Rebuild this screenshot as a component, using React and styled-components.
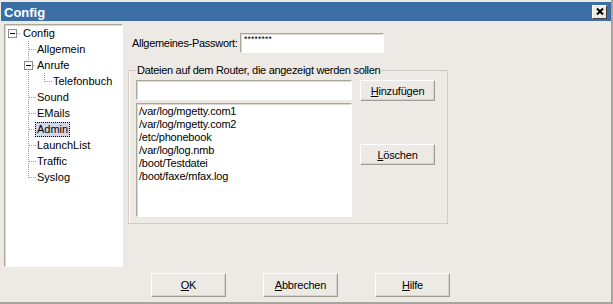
import styled, { createGlobalStyle } from 'styled-components';

const GlobalStyle = createGlobalStyle`
    html, body {
        margin: 0;
        padding: 0;
        background: #edeae5;
    }
    * {
        box-sizing: border-box;
    }
`;

const treeItems = [
    { label: 'Config', cells: ['root'] },
    { label: 'Allgemein', cells: ['blank', 'tee'] },
    { label: 'Anrufe', cells: ['blank', 'teebox'] },
    { label: 'Telefonbuch', cells: ['blank', 'vline', 'elbow'] },
    { label: 'Sound', cells: ['blank', 'tee'] },
    { label: 'EMails', cells: ['blank', 'tee'] },
    { label: 'Admin', cells: ['blank', 'tee'], selected: true },
    { label: 'LaunchList', cells: ['blank', 'tee'] },
    { label: 'Traffic', cells: ['blank', 'tee'] },
    { label: 'Syslog', cells: ['blank', 'elbow'] },
];

const files = [
    '/var/log/mgetty.com1',
    '/var/log/mgetty.com2',
    '/etc/phonebook',
    '/var/log/log.nmb',
    '/boot/Testdatei',
    '/boot/faxe/mfax.log',
];

function Connector ({ kind }) {
    const dot = { stroke: '#a0a0a0', strokeDasharray: '1 1', shapeRendering: 'crispEdges' };
    const hasBox = kind === 'root' || kind === 'teebox';
    const width = kind === 'root' ? 18 : 16;
    return (
        <svg width={width} height="16" viewBox={`0 0 ${width} 16`}>
            {(kind === 'tee' || kind === 'vline') && <line x1="6.5" y1="0" x2="6.5" y2="16" {...dot} />}
            {kind === 'elbow' && <line x1="6.5" y1="0" x2="6.5" y2="9" {...dot} />}
            {kind === 'teebox' && (
                <>
                    <line x1="6.5" y1="0" x2="6.5" y2="4" {...dot} />
                    <line x1="6.5" y1="14" x2="6.5" y2="16" {...dot} />
                </>
            )}
            {(kind === 'tee' || kind === 'elbow') && <line x1="7" y1="8.5" x2="14" y2="8.5" {...dot} />}
            {hasBox && (
                <>
                    <line x1="11" y1="8.5" x2={width - 3} y2="8.5" {...dot} />
                    <rect x="2.5" y="4.5" width="8" height="8" fill="#fff" stroke="#8c8c8c" shapeRendering="crispEdges" />
                    <line x1="4" y1="8.5" x2="9" y2="8.5" stroke="#000" shapeRendering="crispEdges" />
                </>
            )}
        </svg>
    );
}

function App () {
    return (
        <>
            <GlobalStyle />
            <Window>
                <TitleBar>
                    <Title>Config</Title>
                    <CloseButton>
                        <svg width="8" height="7" viewBox="0 0 8 7">
                            <path d="M1 0.5 L7 6.5 M7 0.5 L1 6.5" stroke="#000" strokeWidth="2" />
                        </svg>
                    </CloseButton>
                </TitleBar>
                <Body>
                    <Tree>
                        {treeItems.map((item, index) => (
                            <TreeRow key={index}>
                                {item.cells.map((cell, i) => (
                                    <Connector key={i} kind={cell} />
                                ))}
                                <TreeLabel $selected={item.selected}>{item.label}</TreeLabel>
                            </TreeRow>
                        ))}
                    </Tree>
                    <Main>
                        <PasswordRow>
                            <Label>Allgemeines-Passwort:</Label>
                            <PasswordInput>********</PasswordInput>
                        </PasswordRow>
                        <GroupBox>
                            <Legend>Dateien auf dem Router, die angezeigt werden sollen</Legend>
                            <GroupContent>
                                <LeftColumn>
                                    <TextInput />
                                    <ListBox>
                                        {files.map((file, index) => (
                                            <ListItem key={index}>{file}</ListItem>
                                        ))}
                                    </ListBox>
                                </LeftColumn>
                                <RightColumn>
                                    <Button $height={21}><u>H</u>inzufügen</Button>
                                    <Button $height={21} $top={43}><u>L</u>öschen</Button>
                                </RightColumn>
                            </GroupContent>
                        </GroupBox>
                    </Main>
                </Body>
                <Footer>
                    <Button $height={24}><u>O</u>K</Button>
                    <Button $height={24}><u>A</u>bbrechen</Button>
                    <Button $height={24}><u>H</u>ilfe</Button>
                </Footer>
            </Window>
        </>
    );
}

const Window = styled.div`
    width: 613px;
    height: 304px;
    padding: 2px 0 0 1px;
    background: #edeae5;
    border-right: 2px solid #a7a59e;
    border-bottom: 2px solid #a7a59e;
    display: flex;
    flex-direction: column;
    font-family: "Liberation Sans", Arial, sans-serif;
    font-size: 11px;
    color: #000;
`;

const TitleBar = styled.div`
    width: 610px;
    height: 19px;
    background: #3a6ea5;
    display: flex;
    align-items: center;
    justify-content: space-between;
    padding: 0 4px 0 3px;
`;

const Title = styled.div`
    color: #fff;
    font-weight: bold;
    font-size: 13px;
    padding-top: 1px;
`;

const CloseButton = styled.div`
    width: 15px;
    height: 14px;
    background: #edeae5;
    border: 1px solid;
    border-color: #fff #404040 #404040 #fff;
    display: flex;
    align-items: center;
    justify-content: center;
`;

const Body = styled.div`
    display: flex;
    margin-top: 3px;
    padding-left: 3px;
`;

const Tree = styled.div`
    width: 119px;
    height: 243px;
    background: #fff;
    border: 1px solid;
    border-color: #aca899 #fff #fff #aca899;
    box-shadow: inset 1px 1px 0 #dcd9d2;
    padding: 0 0 0 1px;
    display: flex;
    flex-direction: column;
`;

const TreeRow = styled.div`
    height: 16px;
    display: flex;
    align-items: center;
`;

const TreeLabel = styled.span`
    height: 15px;
    line-height: 13px;
    padding: 0 1px;
    margin-left: -3px;
    border: 1px dotted ${p => p.$selected ? '#000' : 'transparent'};
    background: ${p => p.$selected ? '#d3d6e8' : 'transparent'};
    white-space: nowrap;
`;

const Main = styled.div`
    display: flex;
    flex-direction: column;
    margin-left: 5px;
`;

const PasswordRow = styled.div`
    display: flex;
    align-items: center;
    margin-top: 9px;
    padding-left: 4px;
`;

const Label = styled.span`
    width: 108px;
    letter-spacing: -0.3px;
    white-space: nowrap;
`;

const sunken = `
    background: #fff;
    border: 1px solid;
    border-color: #aca899 #fff #fff #aca899;
    box-shadow: inset 1px 1px 0 #dcd9d2;
`;

const PasswordInput = styled.div`
    ${sunken}
    width: 144px;
    height: 20px;
    padding: 1px 0 0 3px;
    font-size: 8.5px;
    line-height: 9px;
    letter-spacing: 0.2px;
`;

const GroupBox = styled.fieldset`
    width: 320px;
    height: 160px;
    margin: 11px 0 0 0;
    padding: 3px 7px 6px 7px;
    border: 1px solid #d0cdc5;
    box-shadow: inset 1px 0 0 #fff;
    min-width: 0;
`;

const Legend = styled.legend`
    padding: 0 1px;
    line-height: 13px;
    letter-spacing: -0.3px;
    white-space: nowrap;
`;

const GroupContent = styled.div`
    display: flex;
    gap: 8px;
`;

const LeftColumn = styled.div`
    width: 216px;
    display: flex;
    flex-direction: column;
    gap: 3px;
`;

const TextInput = styled.div`
    ${sunken}
    height: 20px;
`;

const ListBox = styled.div`
    ${sunken}
    height: 114px;
    padding: 1px 0 0 2px;
`;

const ListItem = styled.div`
    height: 13px;
    line-height: 13px;
    white-space: nowrap;
    letter-spacing: -0.2px;
`;

const RightColumn = styled.div`
    display: flex;
    flex-direction: column;
`;

const Button = styled.div`
    width: 75px;
    height: ${p => p.$height}px;
    margin-top: ${p => p.$top || 0}px;
    background: #edeae5;
    border: 1px solid;
    border-color: #fff #a09c90 #a09c90 #fff;
    box-shadow: inset -1px -1px 0 #d6d3cb;
    display: flex;
    align-items: center;
    justify-content: center;
    letter-spacing: -0.2px;
    white-space: nowrap;
`;

const Footer = styled.div`
    display: flex;
    gap: 37px;
    margin-top: 6px;
    padding-left: 150px;
`;

export default App;
